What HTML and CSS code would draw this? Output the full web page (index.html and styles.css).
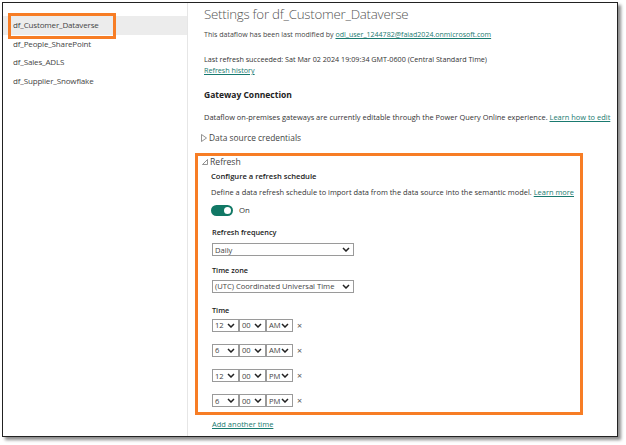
FILE: index.html
```html
<!DOCTYPE html>
<html>
<head>
<meta charset="utf-8">
<link rel="stylesheet" href="styles.css">
</head>
<body>
<div class="frame">
  <aside class="sidebar">
    <div class="item selected">df_Customer_Dataverse</div>
    <div class="item">df_People_SharePoint</div>
    <div class="item">df_Sales_ADLS</div>
    <div class="item">df_Supplier_Snowflake</div>
  </aside>
  <main class="main">
    <h1 class="title">Settings for df_Customer_Dataverse</h1>
    <p class="small modified">This dataflow has been last modified by <a class="link">odl_user_1244782@faiad2024.onmicrosoft.com</a></p>
    <p class="small last">Last refresh succeeded: Sat Mar 02 2024 19:09:34 GMT-0600 (Central Standard Time)<br><a class="link">Refresh history</a></p>
    <h2 class="heading">Gateway Connection</h2>
    <p class="small gw">Dataflow on-premises gateways are currently editable through the Power Query Online experience. <a class="link">Learn how to edit</a></p>
    <div class="collapser creds"><svg class="tri" width="6" height="8" viewBox="0 0 6 8"><path d="M0.5 0.5 L5.5 4 L0.5 7.5 Z" fill="none" stroke="#777" stroke-width="0.8"/></svg>Data source credentials</div>
    <section class="refresh-box">
      <div class="collapser refresh-head"><svg class="tri" width="6" height="6" viewBox="0 0 6 6"><path d="M5.5 0.5 L5.5 5.5 L0.5 5.5 Z" fill="none" stroke="#777" stroke-width="0.8"/></svg>Refresh</div>
      <div class="inner">
        <div class="sub">Configure a refresh schedule</div>
        <p class="desc">Define a data refresh schedule to import data from the data source into the semantic model. <a class="link">Learn more</a></p>
        <div class="toggle-row"><span class="toggle"><span class="knob"></span></span><span class="on">On</span></div>
        <div class="label l-freq">Refresh frequency</div>
        <div class="select wide"><span>Daily</span><svg class="chev" width="8" height="5" viewBox="0 0 8 5"><path d="M1 1 L4 4 L7 1" fill="none" stroke="#222" stroke-width="1.5"/></svg></div>
        <div class="label l-tz">Time zone</div>
        <div class="select wide"><span>(UTC) Coordinated Universal Time</span><svg class="chev" width="8" height="5" viewBox="0 0 8 5"><path d="M1 1 L4 4 L7 1" fill="none" stroke="#222" stroke-width="1.5"/></svg></div>
        <div class="label l-time">Time</div>
        <div class="times">
          <div class="time-row">
            <div class="select s1"><span>12</span><svg class="chev" width="8" height="5" viewBox="0 0 8 5"><path d="M1 1 L4 4 L7 1" fill="none" stroke="#222" stroke-width="1.5"/></svg></div>
            <div class="select s2"><span>00</span><svg class="chev" width="8" height="5" viewBox="0 0 8 5"><path d="M1 1 L4 4 L7 1" fill="none" stroke="#222" stroke-width="1.5"/></svg></div>
            <div class="select s3"><span>AM</span><svg class="chev" width="8" height="5" viewBox="0 0 8 5"><path d="M1 1 L4 4 L7 1" fill="none" stroke="#222" stroke-width="1.5"/></svg></div>
            <span class="x">×</span>
          </div>
          <div class="time-row">
            <div class="select s1"><span>6</span><svg class="chev" width="8" height="5" viewBox="0 0 8 5"><path d="M1 1 L4 4 L7 1" fill="none" stroke="#222" stroke-width="1.5"/></svg></div>
            <div class="select s2"><span>00</span><svg class="chev" width="8" height="5" viewBox="0 0 8 5"><path d="M1 1 L4 4 L7 1" fill="none" stroke="#222" stroke-width="1.5"/></svg></div>
            <div class="select s3"><span>AM</span><svg class="chev" width="8" height="5" viewBox="0 0 8 5"><path d="M1 1 L4 4 L7 1" fill="none" stroke="#222" stroke-width="1.5"/></svg></div>
            <span class="x">×</span>
          </div>
          <div class="time-row">
            <div class="select s1"><span>12</span><svg class="chev" width="8" height="5" viewBox="0 0 8 5"><path d="M1 1 L4 4 L7 1" fill="none" stroke="#222" stroke-width="1.5"/></svg></div>
            <div class="select s2"><span>00</span><svg class="chev" width="8" height="5" viewBox="0 0 8 5"><path d="M1 1 L4 4 L7 1" fill="none" stroke="#222" stroke-width="1.5"/></svg></div>
            <div class="select s3"><span>PM</span><svg class="chev" width="8" height="5" viewBox="0 0 8 5"><path d="M1 1 L4 4 L7 1" fill="none" stroke="#222" stroke-width="1.5"/></svg></div>
            <span class="x">×</span>
          </div>
          <div class="time-row">
            <div class="select s1"><span>6</span><svg class="chev" width="8" height="5" viewBox="0 0 8 5"><path d="M1 1 L4 4 L7 1" fill="none" stroke="#222" stroke-width="1.5"/></svg></div>
            <div class="select s2"><span>00</span><svg class="chev" width="8" height="5" viewBox="0 0 8 5"><path d="M1 1 L4 4 L7 1" fill="none" stroke="#222" stroke-width="1.5"/></svg></div>
            <div class="select s3"><span>PM</span><svg class="chev" width="8" height="5" viewBox="0 0 8 5"><path d="M1 1 L4 4 L7 1" fill="none" stroke="#222" stroke-width="1.5"/></svg></div>
            <span class="x">×</span>
          </div>
        </div>
      </div>
    </section>
    <a class="link add">Add another time</a>
  </main>
</div>
</body>
</html>
```
FILE: styles.css
```css
* { box-sizing: border-box; }
html, body { margin: 0; padding: 0; background: #fff; }
body {
  font-family: "Open Sans", "Noto Sans", sans-serif;
  color: #333;
  width: 626px;
  height: 445px;
  overflow: hidden;
}
.frame {
  margin: 2px 0 0 2px;
  width: 616px;
  height: 435px;
  border: 1px solid #222;
  box-shadow: 3px 3px 3px rgba(0,0,0,0.45);
  display: flex;
  overflow: hidden;
  background: #fff;
}
.sidebar {
  width: 185px;
  flex: none;
  border-right: 1px solid #e6e6e6;
  padding-top: 13px;
}
.item {
  height: 18.7px;
  line-height: 18.7px;
  padding-left: 10px;
  font-size: 8px;
  color: #444;
  position: relative;
  letter-spacing: -0.15px;
}
.item.selected { background: #ececec; }
.item.selected::after {
  content: "";
  position: absolute;
  left: 5px;
  top: -3px;
  width: 102px;
  height: 20px;
  border: 3px solid #f77d25;
}
.main {
  flex: 1;
  padding-left: 16px;
  min-width: 0;
}
.title {
  margin: 1px 0 0 0;
  font-weight: 300;
  font-size: 13.3px;
  line-height: 20px;
  color: #555;
  letter-spacing: -0.25px;
}
.small {
  font-size: 7.2px;
  line-height: 11px;
  margin: 0;
  color: #333;
}
.modified { margin-top: 5px; color: #444; font-size: 7.05px; }
.last { margin-top: 14px; }
.link { color: #1a7a70; text-decoration: underline; }
.heading {
  font-weight: 700;
  font-size: 8.5px;
  margin: 12.5px 0 0 0;
  line-height: 12px;
  color: #222;
}
.gw { margin-top: 11.5px; font-size: 7.45px; }
.collapser {
  display: flex;
  align-items: center;
  color: #444;
}
.tri { margin-right: 2px; flex: none; }
.creds {
  font-size: 8.4px;
  margin: 8.5px 0 0 -3px;
  line-height: 12px;
}
.refresh-box {
  margin: 9px 0 0 -9px;
  width: 388px;
  height: 262px;
  border: 3px solid #f77d25;
  padding: 0 0 0 4px;
}
.refresh-head {
  font-size: 8.6px;
  line-height: 12px;
}
.inner { padding-left: 9px; }
.sub {
  margin-top: 3.5px;
  font-size: 7.6px;
  font-weight: 600;
  line-height: 11px;
  color: #222;
}
.desc {
  font-size: 7.45px;
  line-height: 12px;
  margin: 3.5px 0 0 0;
  color: #333;
  white-space: nowrap;
}
.toggle-row {
  display: flex;
  align-items: center;
  margin-top: 7px;
  height: 11px;
}
.toggle {
  width: 22px;
  height: 11px;
  border-radius: 6px;
  background: #117865;
  position: relative;
}
.knob {
  position: absolute;
  right: 2px;
  top: 2px;
  width: 7px;
  height: 7px;
  border-radius: 50%;
  background: #fff;
}
.on { font-size: 7.8px; margin-left: 6px; color: #333; }
.label {
  font-weight: 600;
  font-size: 7.3px;
  line-height: 11px;
  color: #222;
  padding-left: 1px;
}
.l-freq { margin-top: 11.5px; }
.l-tz { margin-top: 9px; }
.l-time { margin-top: 12.5px; }
.select {
  display: flex;
  align-items: center;
  justify-content: space-between;
  border: 1px solid #9a9a9a;
  height: 13px;
  padding: 0 3px 0 2px;
  font-size: 7.6px;
  color: #444;
  background: #fff;
  margin: 5px 0 0 1px;
}
.l-tz + .select { margin-top: 3.5px; }
.select.wide { width: 142px; }
.times { margin-top: 2.5px; padding-left: 1px; }
.time-row {
  display: flex;
  align-items: center;
  height: 13px;
  margin-bottom: 12.3px;
}
.time-row .select { margin: 0; }
.s1 { width: 27px; }
.s2 { width: 27px; }
.s3 { width: 27px; }
.chev { flex: none; }
.x { font-size: 9px; color: #555; margin-left: 4px; line-height: 13px; }
.add {
  display: block;
  font-size: 7.5px;
  margin: 4.5px 0 0 8px;
  line-height: 11px;
}
```
